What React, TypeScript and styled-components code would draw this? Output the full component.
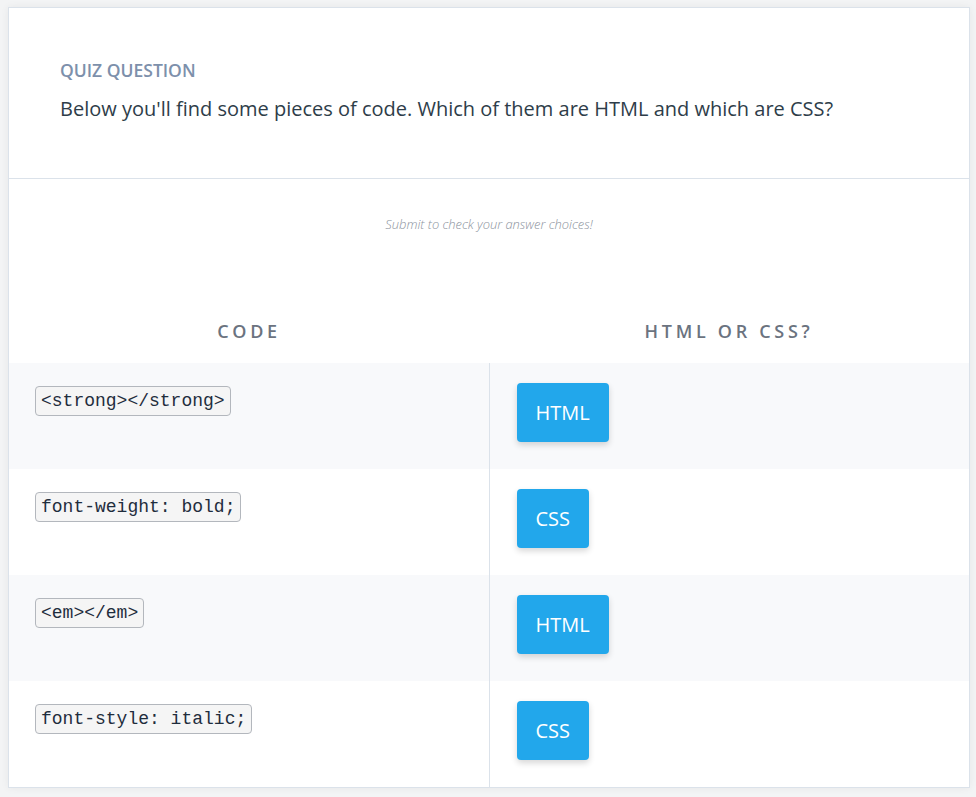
import React from "react";
import styled, { createGlobalStyle } from "styled-components";

const Global = createGlobalStyle`
  html, body { margin: 0; padding: 0; }
  body {
    background: #f3f4f5;
    font-family: "Open Sans", "Noto Sans", sans-serif;
  }
`;

const Card = styled.div`
  margin: 7px 6px 9px 8px;
  background: #fff;
  border: 1px solid #dbe2ea;
  box-shadow: 0 0 8px rgba(0, 0, 0, 0.06);
`;

const Header = styled.div`
  padding: 50px 51px 54px;
  border-bottom: 1px solid #dbe2ea;
`;

const Label = styled.div`
  font-size: 17.5px;
  line-height: 24px;
  font-weight: 600;
  color: #7d90ab;
  text-transform: uppercase;
`;

const Question = styled.div`
  margin-top: 12px;
  font-size: 20px;
  line-height: 30px;
  color: #2e3d49;
`;

const Body = styled.div`
  padding-top: 36px;
`;

const Hint = styled.div`
  text-align: center;
  font-size: 12.9px;
  line-height: 18px;
  font-style: italic;
  font-weight: 300;
  color: #8c939d;
`;

const Table = styled.div`
  margin-top: 85px;
  display: grid;
  grid-template-columns: 480px 1fr;
`;

const ColHead = styled.div`
  text-align: center;
  font-size: 18px;
  line-height: 27px;
  font-weight: 600;
  letter-spacing: 3.7px;
  color: #6b737f;
  padding-bottom: 18px;
`;

const Cell = styled.div<{ $shade: boolean; $right?: boolean }>`
  height: 106px;
  box-sizing: border-box;
  background: ${(p) => (p.$shade ? "#f8f9fb" : "#fff")};
  padding: ${(p) => (p.$right ? "20px 27px" : "23.4px 26px")};
  ${(p) => (p.$right ? "border-left: 1px solid #dbe2ea;" : "")}
  display: flex;
  align-items: flex-start;
`;

const Code = styled.code`
  font-family: "Liberation Mono", monospace;
  font-size: 18px;
  line-height: 20px;
  padding: 4px 5px;
  background: #f5f5f5;
  border: 1px solid #b3b7bd;
  border-radius: 4px;
  color: #1f2d3d;
`;

const Answer = styled.button`
  font-family: "Open Sans", sans-serif;
  font-size: 20px;
  line-height: 27px;
  padding: 16px 19px 16px 18.5px;
  border: none;
  border-radius: 4px;
  background: #22a7eb;
  color: #fff;
  box-shadow: 0 3px 6px rgba(0, 0, 0, 0.16);
`;

const rows = [
  { code: "<strong></strong>", answer: "HTML" },
  { code: "font-weight: bold;", answer: "CSS" },
  { code: "<em></em>", answer: "HTML" },
  { code: "font-style: italic;", answer: "CSS" },
];

export default function App() {
  return (
    <>
      <Global />
      <Card>
        <Header>
          <Label>Quiz Question</Label>
          <Question>
            Below you'll find some pieces of code. Which of them are HTML and which are CSS?
          </Question>
        </Header>
        <Body>
          <Hint>Submit to check your answer choices!</Hint>
          <Table>
            <ColHead>CODE</ColHead>
            <ColHead>HTML OR CSS?</ColHead>
            {rows.map((r, i) => (
              <React.Fragment key={i}>
                <Cell $shade={i % 2 === 0}>
                  <Code>{r.code}</Code>
                </Cell>
                <Cell $shade={i % 2 === 0} $right>
                  <Answer>{r.answer}</Answer>
                </Cell>
              </React.Fragment>
            ))}
          </Table>
        </Body>
      </Card>
    </>
  );
}
